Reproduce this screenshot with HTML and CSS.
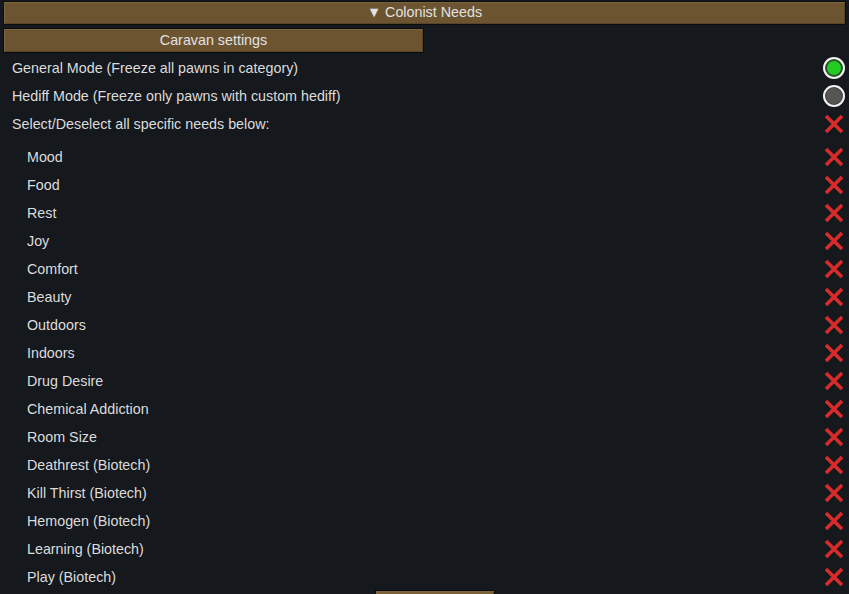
FILE: index.html
```html
<!DOCTYPE html>
<html>
<head>
<meta charset="utf-8">
<link rel="stylesheet" href="styles.css">
</head>
<body>
<div class="page">
  <div class="btn header">▼ Colonist Needs</div>
  <div class="btn caravan">Caravan settings</div>
  <div class="rows">
    <div class="row"><span>General Mode (Freeze all pawns in category)</span><span class="radio on"></span></div>
    <div class="row"><span>Hediff Mode (Freeze only pawns with custom hediff)</span><span class="radio"></span></div>
    <div class="row"><span>Select/Deselect all specific needs below:</span><svg class="x" viewBox="0 0 22 22"><path d="M3 3L19 19M19 3L3 19"/></svg></div>
  </div>
  <div class="rows sub">
    <div class="row"><span>Mood</span><svg class="x" viewBox="0 0 22 22"><path d="M3 3L19 19M19 3L3 19"/></svg></div>
    <div class="row"><span>Food</span><svg class="x" viewBox="0 0 22 22"><path d="M3 3L19 19M19 3L3 19"/></svg></div>
    <div class="row"><span>Rest</span><svg class="x" viewBox="0 0 22 22"><path d="M3 3L19 19M19 3L3 19"/></svg></div>
    <div class="row"><span>Joy</span><svg class="x" viewBox="0 0 22 22"><path d="M3 3L19 19M19 3L3 19"/></svg></div>
    <div class="row"><span>Comfort</span><svg class="x" viewBox="0 0 22 22"><path d="M3 3L19 19M19 3L3 19"/></svg></div>
    <div class="row"><span>Beauty</span><svg class="x" viewBox="0 0 22 22"><path d="M3 3L19 19M19 3L3 19"/></svg></div>
    <div class="row"><span>Outdoors</span><svg class="x" viewBox="0 0 22 22"><path d="M3 3L19 19M19 3L3 19"/></svg></div>
    <div class="row"><span>Indoors</span><svg class="x" viewBox="0 0 22 22"><path d="M3 3L19 19M19 3L3 19"/></svg></div>
    <div class="row"><span>Drug Desire</span><svg class="x" viewBox="0 0 22 22"><path d="M3 3L19 19M19 3L3 19"/></svg></div>
    <div class="row"><span>Chemical Addiction</span><svg class="x" viewBox="0 0 22 22"><path d="M3 3L19 19M19 3L3 19"/></svg></div>
    <div class="row"><span>Room Size</span><svg class="x" viewBox="0 0 22 22"><path d="M3 3L19 19M19 3L3 19"/></svg></div>
    <div class="row"><span>Deathrest (Biotech)</span><svg class="x" viewBox="0 0 22 22"><path d="M3 3L19 19M19 3L3 19"/></svg></div>
    <div class="row"><span>Kill Thirst (Biotech)</span><svg class="x" viewBox="0 0 22 22"><path d="M3 3L19 19M19 3L3 19"/></svg></div>
    <div class="row"><span>Hemogen (Biotech)</span><svg class="x" viewBox="0 0 22 22"><path d="M3 3L19 19M19 3L3 19"/></svg></div>
    <div class="row"><span>Learning (Biotech)</span><svg class="x" viewBox="0 0 22 22"><path d="M3 3L19 19M19 3L3 19"/></svg></div>
    <div class="row"><span>Play (Biotech)</span><svg class="x" viewBox="0 0 22 22"><path d="M3 3L19 19M19 3L3 19"/></svg></div>
  </div>
  <div class="bottom"><div class="btn more"></div></div>
</div>
</body>
</html>
```
FILE: styles.css
```css
html, body {
  margin: 0;
  padding: 0;
  background: #15181d;
  overflow: hidden;
}
.page {
  width: 849px;
  height: 594px;
  display: flex;
  flex-direction: column;
  font-family: "Liberation Sans", Arial, sans-serif;
  font-size: 14.3px;
  color: #dcdcdc;
  overflow: hidden;
}
.page > * {
  flex-shrink: 0;
}
.btn {
  box-sizing: border-box;
  background: #6c5431;
  border: 1px solid #0c0c0c;
  box-shadow: inset 1px 1px 0 #7d6440, inset -1px -1px 0 #58442a;
  color: #e2e2e2;
  display: flex;
  align-items: center;
  justify-content: center;
  flex-shrink: 0;
  padding-bottom: 2px;
}
.header {
  margin: 1px 3px 0 3px;
  height: 24px;
}
.caravan {
  margin: 3px 0 0 3px;
  width: 421px;
  height: 25px;
}
.rows {
  display: flex;
  flex-direction: column;
  margin-top: 1px;
}
.rows.sub {
  margin-top: 5px;
}
.row {
  height: 28px;
  flex-shrink: 0;
  display: flex;
  align-items: center;
  justify-content: space-between;
  padding: 0 4px 0 12px;
}
.sub .row {
  padding-left: 27px;
}
.radio {
  box-sizing: border-box;
  width: 22px;
  height: 22px;
  border-radius: 50%;
  border: 2px solid #f2f2f2;
  background: #555555;
  box-shadow: inset 0 0 0 1px #3a3a3a;
}
.radio.on {
  background: #22cc22;
  box-shadow: inset 0 0 0 2px #2f4a2f;
}
.x {
  width: 22px;
  height: 22px;
  fill: none;
  stroke: #d92b2b;
  stroke-width: 3.6;
  stroke-linecap: butt;
}
.bottom {
  display: flex;
  padding-left: 375px;
  margin-top: -1px;
}
.more {
  width: 120px;
  height: 24px;
  background: #7a6136;
}
```
